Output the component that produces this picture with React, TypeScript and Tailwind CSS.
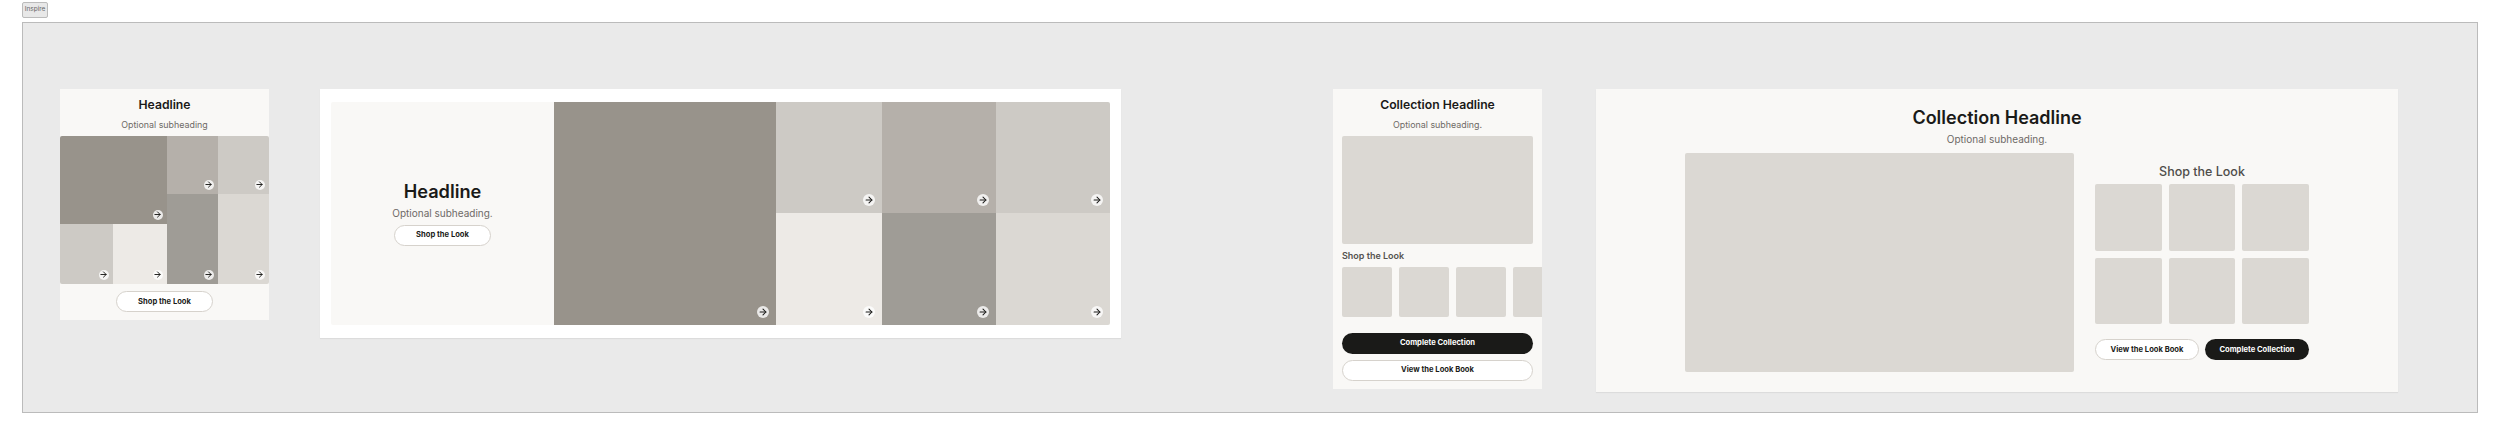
import { ArrowRight } from 'lucide-react';

type TileProps = {
  color: string;
  className?: string;
  large?: boolean;
};

function Tile({ color, className, large }: TileProps) {
  return (
    <div className={`relative ${color} ${className ?? ''}`}>
      <span
        className={
          large
            ? 'absolute right-[7px] bottom-[7px] flex h-[12.5px] w-[12.5px] items-center justify-center rounded-full bg-white/80 text-[#1a1a18]'
            : 'absolute right-[4px] bottom-[4px] flex h-[10.5px] w-[10.5px] items-center justify-center rounded-full bg-white/80 text-[#1a1a18]'
        }
      >
        <ArrowRight size={large ? 10 : 9} strokeWidth={2.5} />
      </span>
    </div>
  );
}

function OutlineButton({ label, className }: { label: string; className: string }) {
  return (
    <button className={`flex h-[21px] items-center justify-center rounded-full border border-[#d6d2cc] bg-white text-[7.6px] font-bold text-[#1a1a18] ${className}`}>
      {label}
    </button>
  );
}

function DarkButton({ label, className }: { label: string; className: string }) {
  return (
    <button className={`flex h-[21px] items-center justify-center rounded-full bg-[#1a1a18] text-[7.6px] font-bold text-white ${className}`}>
      {label}
    </button>
  );
}

function MobileMosaic() {
  return (
    <div className="flex w-[209px] flex-col items-center bg-[#f9f8f6]">
      <h2 className="mt-[9px] h-[14px] text-[12.2px] leading-[14px] font-semibold text-[#1a1a18]">Headline</h2>
      <p className="mt-[7px] h-[12px] text-[8.9px] leading-[12px] text-[#6e6a66]">Optional subheading</p>
      <div className="mt-[5px] flex h-[148px] w-full overflow-hidden rounded-[2px]">
        <div className="flex w-[107px] flex-col">
          <Tile color="bg-[#98938b]" className="h-[88px]" />
          <div className="flex flex-1">
            <Tile color="bg-[#cdcac5]" className="w-[53px]" />
            <Tile color="bg-[#edeae6]" className="flex-1" />
          </div>
        </div>
        <div className="grid flex-1 grid-cols-2 grid-rows-[58px_90px]">
          <Tile color="bg-[#b5b0aa]" />
          <Tile color="bg-[#cdcac5]" />
          <Tile color="bg-[#9f9c96]" />
          <Tile color="bg-[#dbd8d3]" />
        </div>
      </div>
      <OutlineButton label="Shop the Look" className="mt-[7px] mb-[8px] w-[97px]" />
    </div>
  );
}

function DesktopMosaic() {
  return (
    <div className="ml-[51px] w-[801px] bg-white px-[11px] py-[13px] shadow-[0_1px_1px_rgba(0,0,0,0.06)]">
      <div className="flex h-[223px] overflow-hidden rounded-[2px]">
        <div className="flex w-[223px] flex-col items-center justify-center bg-[#f9f8f6] pb-[3px]">
          <h2 className="text-[18.2px] leading-[24px] font-semibold text-[#1a1a18]">Headline</h2>
          <p className="mt-[3px] text-[10px] leading-[14px] text-[#6e6a66]">Optional subheading.</p>
          <OutlineButton label="Shop the Look" className="mt-[5px] w-[97px]" />
        </div>
        <Tile large color="bg-[#98938b]" className="w-[222px]" />
        <div className="grid flex-1 grid-cols-[106px_114px_114px] grid-rows-[111px_112px]">
          <Tile large color="bg-[#cdcac5]" />
          <Tile large color="bg-[#b5b0aa]" />
          <Tile large color="bg-[#cdcac5]" />
          <Tile large color="bg-[#edeae6]" />
          <Tile large color="bg-[#9f9c96]" />
          <Tile large color="bg-[#dbd8d3]" />
        </div>
      </div>
    </div>
  );
}

function MobileCollection() {
  return (
    <div className="ml-[212px] flex w-[209px] flex-col overflow-hidden bg-[#f9f8f6] px-[9px]">
      <h2 className="mt-[9px] h-[14px] text-center text-[12.2px] leading-[14px] font-semibold text-[#1a1a18]">Collection Headline</h2>
      <p className="mt-[7px] h-[12px] text-center text-[8.9px] leading-[12px] text-[#6e6a66]">Optional subheading.</p>
      <div className="mt-[5px] h-[107.5px] rounded-[2px] bg-[#dbd8d3]" />
      <h3 className="mt-[6px] h-[12px] text-[9px] leading-[12px] font-semibold text-[#555350]">Shop the Look</h3>
      <div className="mt-[5px] -mr-[9px] flex gap-[7px]">
        {[0, 1, 2, 3].map((i) => (
          <div key={i} className="h-[50px] w-[50px] shrink-0 rounded-[2px] bg-[#dbd8d3]" />
        ))}
      </div>
      <DarkButton label="Complete Collection" className="mt-[16px] w-full" />
      <OutlineButton label="View the Look Book" className="mt-[6px] mb-[8px] w-full" />
    </div>
  );
}

function DesktopCollection() {
  return (
    <div className="ml-[54px] flex h-[303px] w-[802px] flex-col items-center bg-[#f9f8f6] shadow-[0_1px_1px_rgba(0,0,0,0.06)]">
      <h2 className="mt-[18px] h-[22px] text-[18px] leading-[22px] font-semibold text-[#1a1a18]">Collection Headline</h2>
      <p className="mt-[3px] h-[14px] text-[10px] leading-[14px] text-[#6e6a66]">Optional subheading.</p>
      <div className="mt-[7px] flex w-[624px] items-start gap-[21px]">
        <div className="h-[219px] w-[389px] rounded-[2px] bg-[#dbd8d3]" />
        <div className="flex w-[214px] flex-col items-center">
          <h3 className="mt-[11px] h-[16px] text-[12.5px] leading-[16px] font-medium text-[#4f4d4a]">Shop the Look</h3>
          <div className="mt-[4px] grid grid-cols-3 gap-[7px]">
            {[0, 1, 2, 3, 4, 5].map((i) => (
              <div key={i} className="h-[66.5px] w-[66.5px] rounded-[2px] bg-[#dbd8d3]" />
            ))}
          </div>
          <div className="mt-[15px] flex w-full gap-[6px]">
            <OutlineButton label="View the Look Book" className="w-[104px]" />
            <DarkButton label="Complete Collection" className="w-[104px]" />
          </div>
        </div>
      </div>
    </div>
  );
}

export default function App() {
  return (
    <div className="h-[435px] w-[2500px] overflow-hidden bg-white font-['Inter',sans-serif]">
      <button className="mt-[2px] ml-[22px] flex h-[16px] w-[26px] items-center justify-center rounded-[2px] border border-[#bbbbbb] bg-[#e8e8e8] text-[6.5px] text-[#666666]">
        Inspire
      </button>
      <div className="mt-[4px] ml-[22px] flex h-[391px] w-[2456px] items-start border border-[#bbbbbb] bg-[#eaeaea] pt-[66px] pl-[37px]">
        <MobileMosaic />
        <DesktopMosaic />
        <MobileCollection />
        <DesktopCollection />
      </div>
    </div>
  );
}
